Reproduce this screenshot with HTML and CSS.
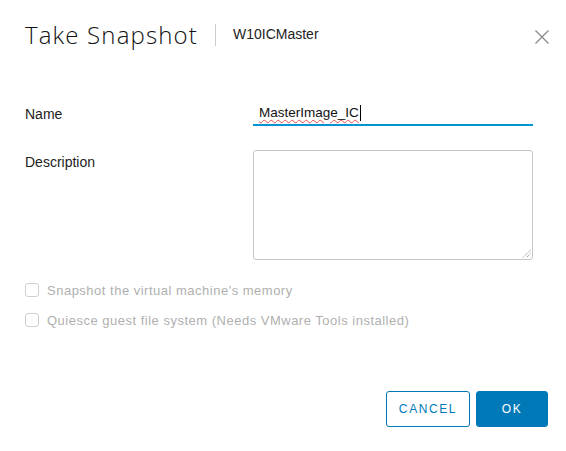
FILE: index.html
```html
<!DOCTYPE html>
<html>
<head>
<meta charset="utf-8">
<link rel="stylesheet" href="styles.css">
</head>
<body>
<div class="modal">
  <div class="header">
    <h1 class="title">Take Snapshot</h1>
    <span class="sep"></span>
    <span class="subtitle">W10ICMaster</span>
    <button class="close" aria-label="Close">
      <svg width="16" height="16" viewBox="0 0 16 16"><path d="M1.5 1.5 L14.5 14.5 M14.5 1.5 L1.5 14.5" stroke="#8a8a8a" stroke-width="1.3" fill="none"/></svg>
    </button>
  </div>
  <div class="form">
    <div class="row name-row">
      <label class="label">Name</label>
      <div class="input" role="textbox"><span class="spell">MasterImage_IC</span><span class="caret"></span></div>
    </div>
    <div class="row desc-row">
      <label class="label">Description</label>
      <div class="textarea" role="textbox">
        <svg class="grip" width="9" height="9" viewBox="0 0 9 9"><path d="M8.5 1 L1 8.5 M8.5 4.5 L4.5 8.5" stroke="#777" stroke-width="1" stroke-dasharray="1 1" fill="none"/></svg>
      </div>
    </div>
    <div class="checks">
      <label class="check"><span class="box"></span><span>Snapshot the virtual machine's memory</span></label>
      <label class="check"><span class="box"></span><span>Quiesce guest file system (Needs VMware Tools installed)</span></label>
    </div>
  </div>
  <div class="footer">
    <button class="btn btn-outline">CANCEL</button>
    <button class="btn btn-primary">OK</button>
  </div>
</div>
</body>
</html>
```
FILE: styles.css
```css
html, body {
  margin: 0;
  padding: 0;
  background: #fff;
}
body {
  font-family: "Liberation Sans", Arial, sans-serif;
  color: #000;
  width: 566px;
  height: 451px;
  overflow: hidden;
}
.modal {
  display: flex;
  flex-direction: column;
  padding: 17px 18px 0 25px;
  height: 451px;
  box-sizing: border-box;
}
.header {
  display: flex;
  align-items: center;
  height: 36px;
}
.title {
  margin: 0;
  font-family: "Open Sans", sans-serif;
  font-weight: 300;
  font-size: 24px;
  letter-spacing: 1.15px;
  color: #111;
  line-height: 36px;
}
.sep {
  width: 1px;
  height: 22px;
  background: #ccc;
  margin: 0 17px 0 17px;
}
.subtitle {
  font-size: 14px;
  color: #222;
  margin-top: -2px;
}
.close {
  margin-left: auto;
  margin-right: -2px;
  margin-top: 4px;
  background: none;
  border: 0;
  padding: 0;
  width: 16px;
  height: 16px;
  display: flex;
}
.form {
  display: flex;
  flex-direction: column;
  margin-top: 51px;
}
.row {
  display: flex;
}
.label {
  width: 228px;
  flex: none;
  font-size: 14px;
  color: #222;
}
.name-row {
  align-items: flex-end;
}
.name-row .label {
  padding-bottom: 4px;
}
.input {
  width: 280px;
  height: 22px;
  box-sizing: border-box;
  border-bottom: 2px solid #0094d2;
  padding-left: 6px;
  font-size: 13.5px;
  line-height: 18px;
  color: #111;
  display: flex;
  align-items: flex-start;
}
.spell {
  text-decoration: underline wavy #e34b4b;
  text-decoration-thickness: 1px;
  text-underline-offset: 2px;
}
.caret {
  width: 1px;
  height: 16px;
  background: #000;
  margin-left: 1px;
  margin-top: 1px;
}
.desc-row {
  margin-top: 24px;
}
.desc-row .label {
  padding-top: 4px;
}
.textarea {
  width: 280px;
  height: 110px;
  box-sizing: border-box;
  border: 1px solid #c6c6c6;
  border-radius: 3px;
  position: relative;
}
.grip {
  position: absolute;
  right: 1px;
  bottom: 1px;
}
.checks {
  display: flex;
  flex-direction: column;
  gap: 14px;
  margin-top: 22px;
}
.check {
  display: flex;
  align-items: center;
  gap: 8px;
  font-size: 13px;
  letter-spacing: 0.5px;
  color: #b0b0b0;
  height: 16px;
}
.box {
  width: 14px;
  height: 14px;
  box-sizing: border-box;
  border: 1px solid #cfcfcf;
  border-radius: 3px;
  flex: none;
}
.footer {
  display: flex;
  justify-content: flex-end;
  gap: 6px;
  margin-top: auto;
  margin-bottom: 24px;
}
.btn {
  height: 36px;
  box-sizing: border-box;
  border-radius: 3px;
  font-family: "Liberation Sans", Arial, sans-serif;
  font-size: 12px;
  letter-spacing: 1.6px;
  padding: 0;
}
.btn-outline {
  width: 84px;
  background: #fff;
  border: 1px solid #0079b8;
  color: #0079b8;
}
.btn-primary {
  width: 72px;
  background: #0079b8;
  border: 1px solid #0079b8;
  color: #fff;
}
```
